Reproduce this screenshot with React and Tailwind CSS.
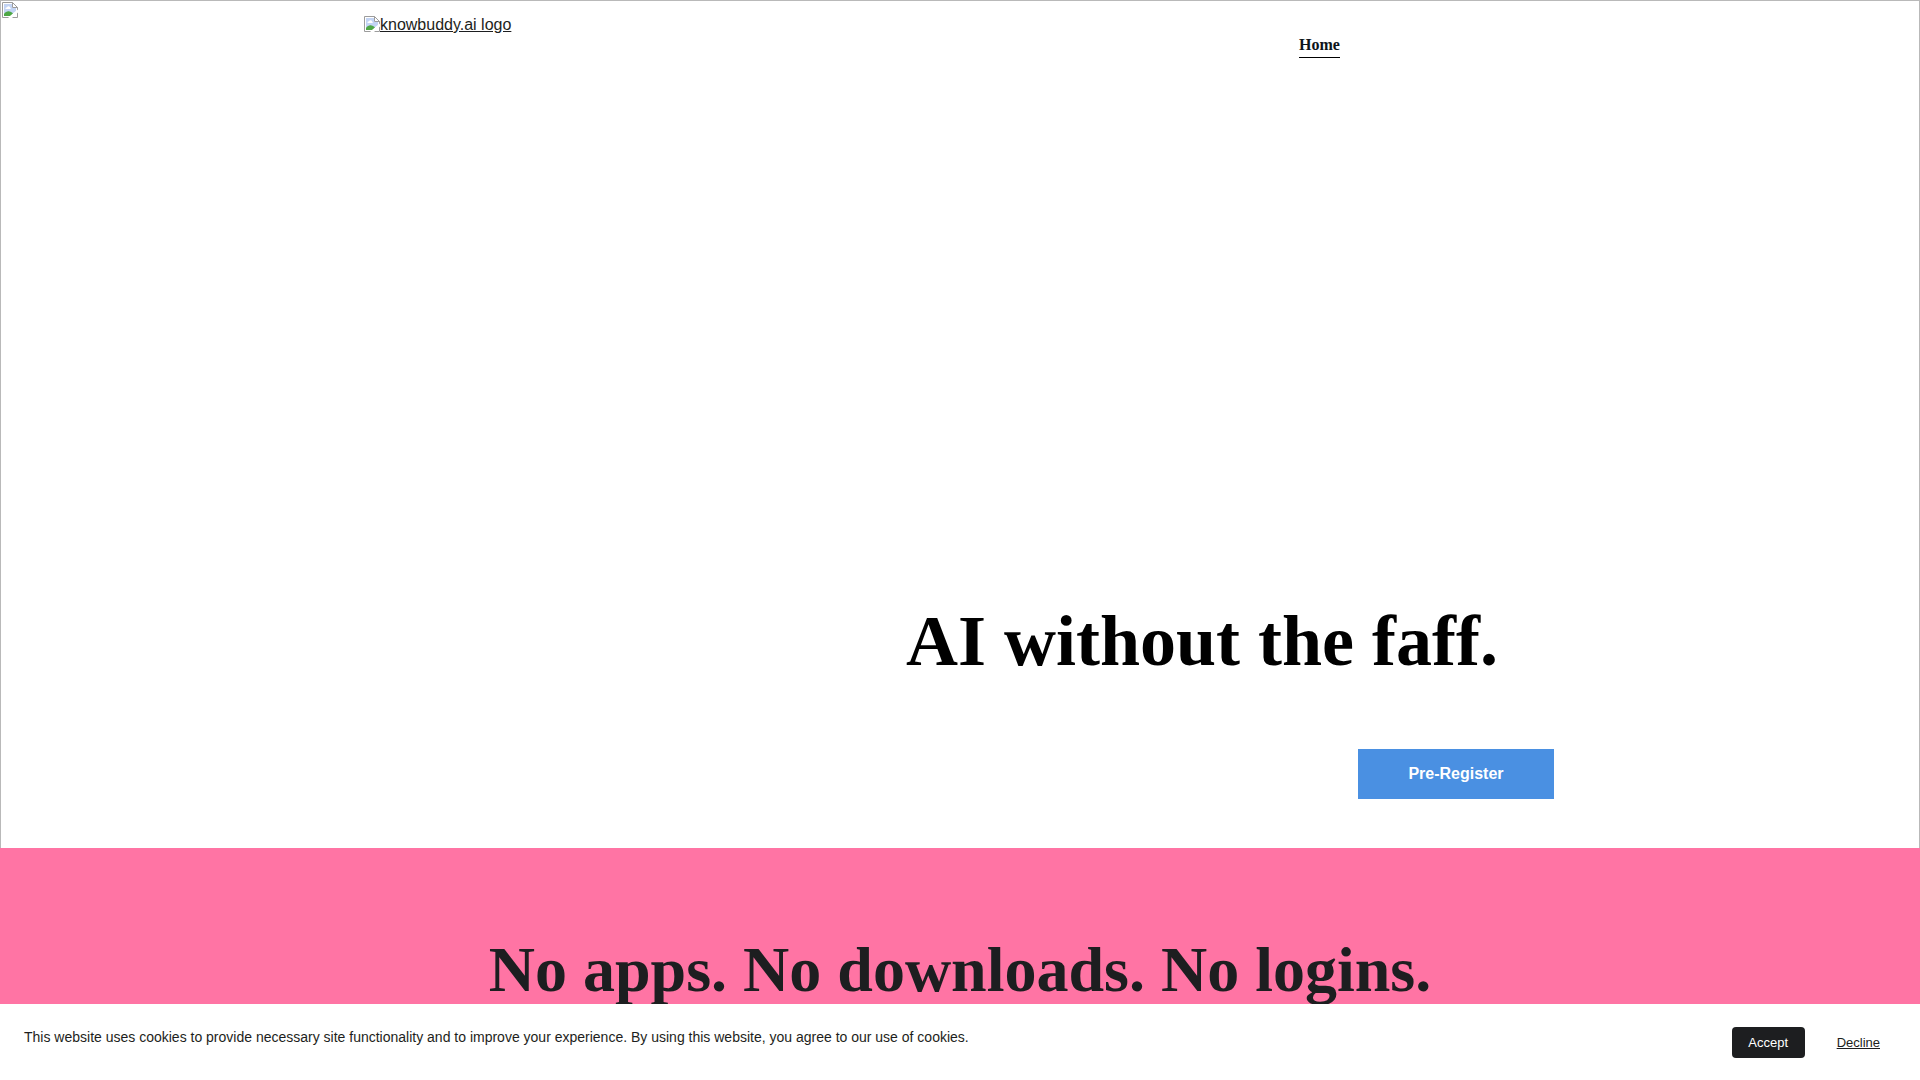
function BrokenImage({ className }) {
  return (
    <svg className={className} width="16" height="16" viewBox="0 0 16 16" aria-hidden="true">
      <path d="M0.5 0.5h10l5 5v10h-15z" fill="#fff" stroke="#9c9c9c" />
      <path d="M2 2h8v4h4v3L7 14H2z" fill="#c3d4f4" />
      <path d="M3.5 7a1.5 1.5 0 0 1 1.5-1.8 1.7 1.7 0 0 1 3.2 0.3A1 1 0 0 1 8.5 7z" fill="#fff" />
      <path d="M2 14v-2c1.5-2 3.5-3 5.5-2.5 1.5 0.3 2.5 1 3.5 2L8 14z" fill="#4ea845" />
      <path d="M10.5 0.5v5h5z" fill="#fff" stroke="#9c9c9c" />
      <path d="M16 7.5v3L10 16H6z" fill="#fff" />
    </svg>
  );
}

function Header() {
  return (
    <header className="mx-auto flex w-full max-w-[1192px] items-start justify-between">
      <a href="#home" className="mt-[15px] flex items-start text-[#1d1e20] underline">
        <BrokenImage />
        <span className="text-base leading-[18px]">knowbuddy.ai logo</span>
      </a>
      <nav className="mt-8 flex w-[257px] font-['Liberation_Serif',serif] text-base font-bold">
        <a href="#home" className="border-b border-black leading-6 text-[#0d141a]">
          Home
        </a>
      </nav>
    </header>
  );
}

function Hero() {
  return (
    <section
      id="home"
      className="relative flex h-[848px] flex-col border border-b-0 border-[#b9b9b9] bg-white"
    >
      <BrokenImage className="absolute top-px left-px" />
      <Header />
      <div className="mx-auto mt-auto flex w-full max-w-[1188px] flex-col items-end pb-[49px]">
        <h1 className="mr-[56px] font-['Liberation_Serif',serif] text-7xl leading-[86px] font-bold text-black">
          AI without the faff.
        </h1>
        <a
          href="#register"
          className="mt-[65px] flex h-[50px] w-[196px] items-center justify-center bg-[#4a90e2] text-base font-bold text-white"
        >
          Pre-Register
        </a>
      </div>
    </section>
  );
}

function CookieBanner() {
  return (
    <div className="fixed inset-x-0 bottom-0 flex items-start justify-between bg-white px-6 pt-[23px] pb-[22px] text-[#1d1e20]">
      <p className="text-sm leading-5">
        This website uses cookies to provide necessary site functionality and to improve your
        experience. By using this website, you agree to our use of cookies.
      </p>
      <div className="flex shrink-0">
        <button type="button" className="h-[31px] w-[73px] rounded-sm bg-[#1d1e20] text-[13px] text-white">
          Accept
        </button>
        <button type="button" className="ml-4 h-[31px] px-4 text-[13px] underline">
          Decline
        </button>
      </div>
    </div>
  );
}

export default function App() {
  return (
    <div className="h-screen overflow-hidden bg-white font-['Liberation_Sans',sans-serif]">
      <Hero />
      <section className="min-h-[400px] bg-[#ff74a4] pt-[83px] text-center">
        <h2 className="font-['Liberation_Serif',serif] text-[64px] leading-[77px] font-bold text-[#1d1e20]">
          No apps. No downloads. No logins.
        </h2>
      </section>
      <CookieBanner />
    </div>
  );
}
